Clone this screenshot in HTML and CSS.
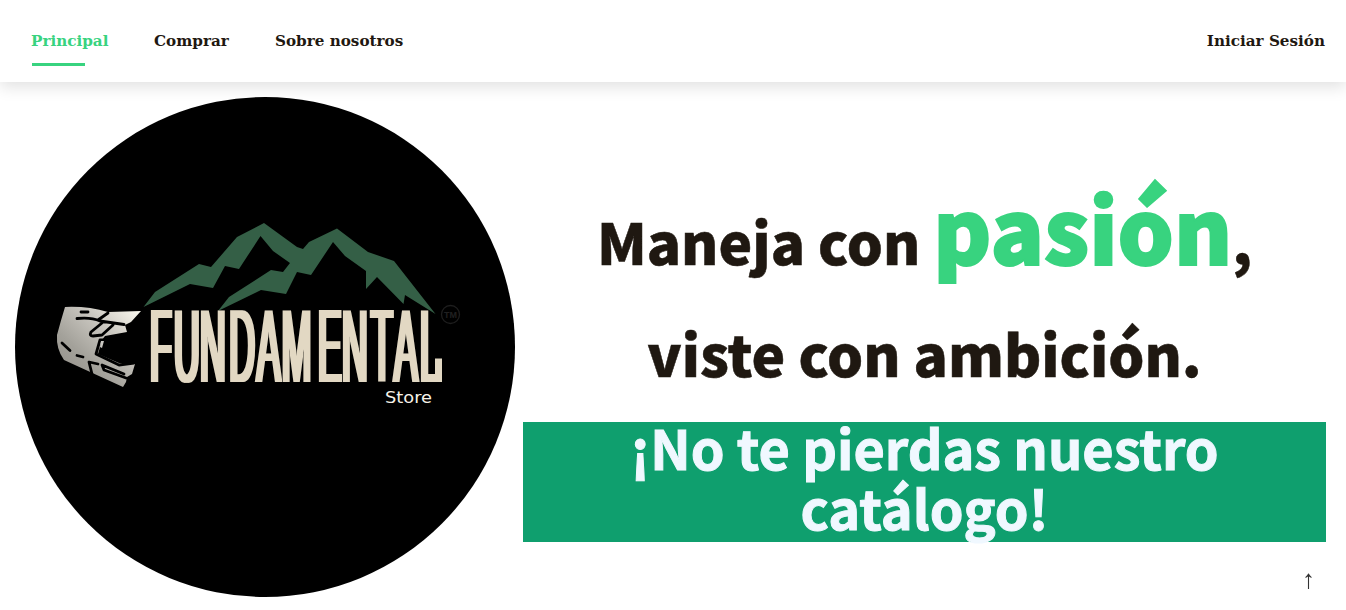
FILE: index.html
```
<!DOCTYPE html>
<html lang="es">
<head>
<meta charset="utf-8">
<title>Fundamental Store</title>
<link rel="stylesheet" href="styles.css">
</head>
<body>
<header class="navbar">
  <nav class="links">
    <a class="link active" href="#">Principal</a>
    <a class="link buy" href="#">Comprar</a>
    <a class="link about" href="#">Sobre nosotros</a>
  </nav>
  <a class="link login" href="#">Iniciar Sesión</a>
</header>
<main class="hero">
  <svg class="logo" viewBox="15 97 500 500" role="img" aria-label="Fundamental Store">
    <defs>
      <linearGradient id="shell" x1="0" y1="1" x2="1" y2="0">
        <stop offset="0" stop-color="#8f8c86"/>
        <stop offset=".35" stop-color="#a3a19a"/>
        <stop offset=".65" stop-color="#c9c6bf"/>
        <stop offset="1" stop-color="#fffdf3"/>
      </linearGradient>
      <filter id="widen" x="-5%" y="-5%" width="110%" height="110%"><feMorphology operator="dilate" radius="2 0"/></filter>
    </defs>
    <circle cx="265" cy="347" r="250"/>
    <!-- mountains -->
    <path class="peak" d="M143.500 307 L155 292 L199 264 L211 267 L237 237 L264 223 L297 247 L303 249 L309 242 L337 228.500 L368 252 L394 261 L435.500 314 L405 295 L403.500 304 L377 277 L366 289 L366 271 L345 256 L333 242 L311 275 L297 272 L286 294 L261 290 L218 311 L229 297 L271 270 L283 272 L290 263 L273 251 L260.500 236 L239 269 L225 266 L213 288 L190 284 Z"/>
    <!-- helmet -->
    <path fill="url(#shell)" d="M65 307 Q88 306 108 312 L141 311 L131 322 L125 325 L127 332 L105 336 L102 340 L98 354 L119 363 L135 364 L132 374 L127 377 L126 382 L123 387 L64 360 Q56 349 57 335 Q61 320 65 307Z"/>
    <path class="gap" d="M81 312H88M77 318.500Q91 317 100 321L124 324.500M98 320L108 313M102 323L91 332Q89 336 93 336L102 335L113 325M62 343L70 350.500M77 355.500L83 357M104 340H100L96 354L119 365L134 363M92 374L89 362L98 364M126 378L104 370L102 365L124 374"/>
    <path class="inner" d="M104 341H101L100 347L102 348Z"/>
    <g filter="url(#widen)">
      <text class="wordmark" transform="translate(0 382) scale(.34 1)" y="0" x="441 512 588 674 755 829 935 1006 1091 1159 1235">FUNDAMENTAL</text>
    </g>
    <path class="hook" d="M435 358.500H442V382H435Z"/>
    <text class="store" x="385" y="403" textLength="47" lengthAdjust="spacingAndGlyphs">Store</text>
    <circle class="mark-ring" cx="450.500" cy="314.500" r="9"/>
    <text class="mark" x="450.500" y="318" text-anchor="middle">TM</text>
  </svg>
  <section class="copy">
    <h1 class="slogan">Maneja con <span class="passion">pasión</span><span class="comma">,</span><br><span class="second">viste con ambición.</span></h1>
    <h2 class="banner"><span class="offer">¡No te pierdas nuestro<br>catálogo!</span></h2>
  </section>
</main>
<a class="to-top" href="#">↑</a>
</body>
</html>
```
FILE: styles.css
```
* { box-sizing: border-box; }
html, body { margin: 0; height: 610px; overflow: hidden; background: #fff; }
a { text-decoration: none; }
.navbar {
  height: 82px;
  display: flex;
  justify-content: space-between;
  padding: 30px 21px 0 31px;
  background: #fff;
  box-shadow: 0 5px 15px rgba(0, 0, 0, .12);
}
.links { display: flex; gap: 46px; }
.link {
  height: 36px;
  font: bold 15.200px/23px "DejaVu Serif", serif;
  color: #1f1811;
  white-space: nowrap;
}
.active { color: #38d37f; width: 77px; }
.active::after { content: ""; display: block; width: 53px; height: 3px; margin: 10px 0 0 1px; background: #38d37f; }
.buy { width: 75px; }
.about { width: 128px; }
.hero { display: flex; padding: 15px 20px 0 15px; gap: 8px; }
.logo { width: 500px; height: 500px; flex: none; }
.peak { fill: #345f46; }
.gap { fill: none; stroke: #000; stroke-width: 2.800; stroke-linecap: round; stroke-linejoin: round; }
.inner { fill: #c9c7c1; }
.wordmark { font: 104.500px "Liberation Sans", Arial, sans-serif; fill: #e2d8c3; }
.hook { fill: #e2d8c3; }
.store { font: 16px "DejaVu Sans", sans-serif; fill: #f7f2e8; }
.mark { font: bold 9px "Liberation Sans", sans-serif; fill: #202020; }
.mark-ring { fill: none; stroke: #1e1e1e; stroke-width: 1.300; }
.copy { flex: 1; text-align: center; font-family: "Noto Sans CJK JP", sans-serif; }
.slogan {
  margin: 0;
  padding-top: 87px;
  height: 325px;
  font-size: 56.800px;
  line-height: 112px;
  font-weight: 900;
  color: #1f1811;
  -webkit-text-stroke: .5px #1f1811;
  white-space: nowrap;
}
.passion { font-size: 88.500px; line-height: 1px; color: #38d37f; -webkit-text-stroke: 2px #38d37f; }
.banner { margin: 0; height: 120px; font-size: 54px; line-height: 60px; font-weight: 700; color: #f0f8ff; background: #0f9f6e; white-space: nowrap; }
.offer { display: block; transform: translateY(-5px); -webkit-text-stroke: 1px #f0f8ff; }
.to-top { position: fixed; right: 31px; bottom: 15px; font: 26px/30px "Liberation Serif", serif; color: #333; }
```
